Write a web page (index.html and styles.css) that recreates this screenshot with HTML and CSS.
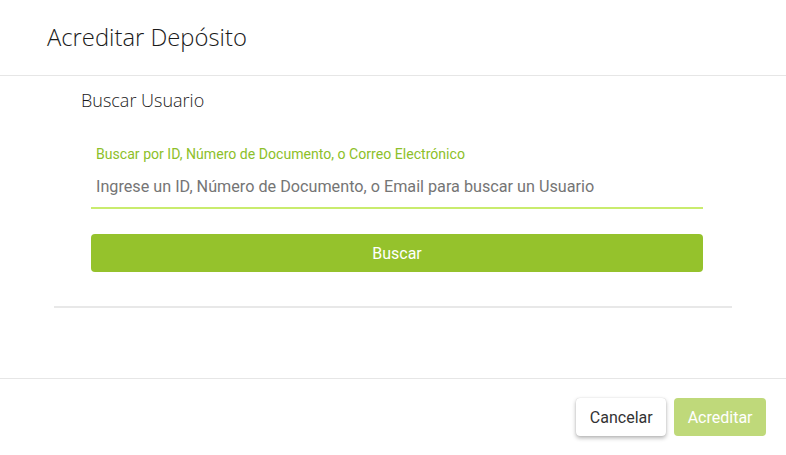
FILE: index.html
```html
<!DOCTYPE html>
<html lang="es">
<head>
<meta charset="utf-8">
<title>Acreditar Depósito</title>
<link rel="stylesheet" href="styles.css">
</head>
<body>
<div class="modal">
  <header class="modal-header">
    <h1 class="modal-title">Acreditar Depósito</h1>
  </header>
  <main class="modal-body">
    <section class="panel">
      <h2 class="panel-title">Buscar Usuario</h2>
      <div class="form">
        <label class="field">
          <span class="field-label">Buscar por ID, Número de Documento, o Correo Electrónico</span>
          <input class="field-input" type="text" placeholder="Ingrese un ID, Número de Documento, o Email para buscar un Usuario">
        </label>
        <button class="btn-search" type="button">Buscar</button>
      </div>
    </section>
  </main>
  <footer class="modal-footer">
    <button class="btn btn-cancel" type="button">Cancelar</button>
    <button class="btn btn-primary" type="button" disabled>Acreditar</button>
  </footer>
</div>
</body>
</html>
```
FILE: styles.css
```css
* { box-sizing: border-box; }
html, body { margin: 0; padding: 0; background: #fff; }
body { font-family: Roboto, "Liberation Sans", sans-serif; }

.modal {
  width: 786px;
  height: 455px;
  display: flex;
  flex-direction: column;
  background: #fff;
}

.modal-header {
  height: 76px;
  border-bottom: 1px solid #e6e6e6;
  padding: 0 0 0 47px;
  display: flex;
  align-items: center;
}
.modal-title {
  margin: 0;
  font-family: "Open Sans", sans-serif;
  font-weight: 300;
  font-size: 23.8px;
  color: #1a1a1a;
  padding-bottom: 1px;
}

.modal-body {
  flex: 1;
  padding: 0 54px;
}
.panel {
  border-bottom: 2px solid #e8e8e8;
  padding: 12px 0 34px;
}
.panel-title {
  margin: 0 0 0 27px;
  font-family: "Open Sans", sans-serif;
  font-weight: 300;
  font-size: 18px;
  line-height: 24px;
  color: #1a1a1a;
}
.form {
  padding: 0 29px 0 37px;
  margin-top: 34px;
}
.field {
  display: flex;
  flex-direction: column;
}
.field-label {
  font-size: 14.1px;
  line-height: 16px;
  color: #8dc02a;
  padding-left: 5px;
}
.field-input {
  border: 0;
  border-bottom: 2px solid #c9ec6e;
  outline: none;
  font-family: Roboto, sans-serif;
  font-size: 16.2px;
  height: 47px;
  padding: 5px 5px 1px;
  color: #555;
  background: transparent;
}
.field-input::placeholder { color: #757575; opacity: 1; }

.btn-search {
  display: block;
  width: 100%;
  margin-top: 25px;
  height: 38px;
  border: 0;
  border-radius: 4px;
  background: #95c22c;
  color: #fff;
  font-family: Roboto, sans-serif;
  font-size: 16px;
}

.modal-footer {
  height: 77px;
  border-top: 1px solid #e6e6e6;
  display: flex;
  justify-content: flex-end;
  align-items: flex-start;
  gap: 8px;
  padding: 19px 20px 0 0;
}
.btn {
  height: 38px;
  border: 0;
  border-radius: 4px;
  font-family: Roboto, sans-serif;
  font-size: 16px;
  padding: 0 13.5px;
}
.btn-cancel {
  background: #fff;
  color: #333;
  box-shadow: 0 2px 4px rgba(0,0,0,0.3), 0 0 1px rgba(0,0,0,0.2);
}
.btn-primary {
  background: #bfd97a;
  color: #fff;
}
```
